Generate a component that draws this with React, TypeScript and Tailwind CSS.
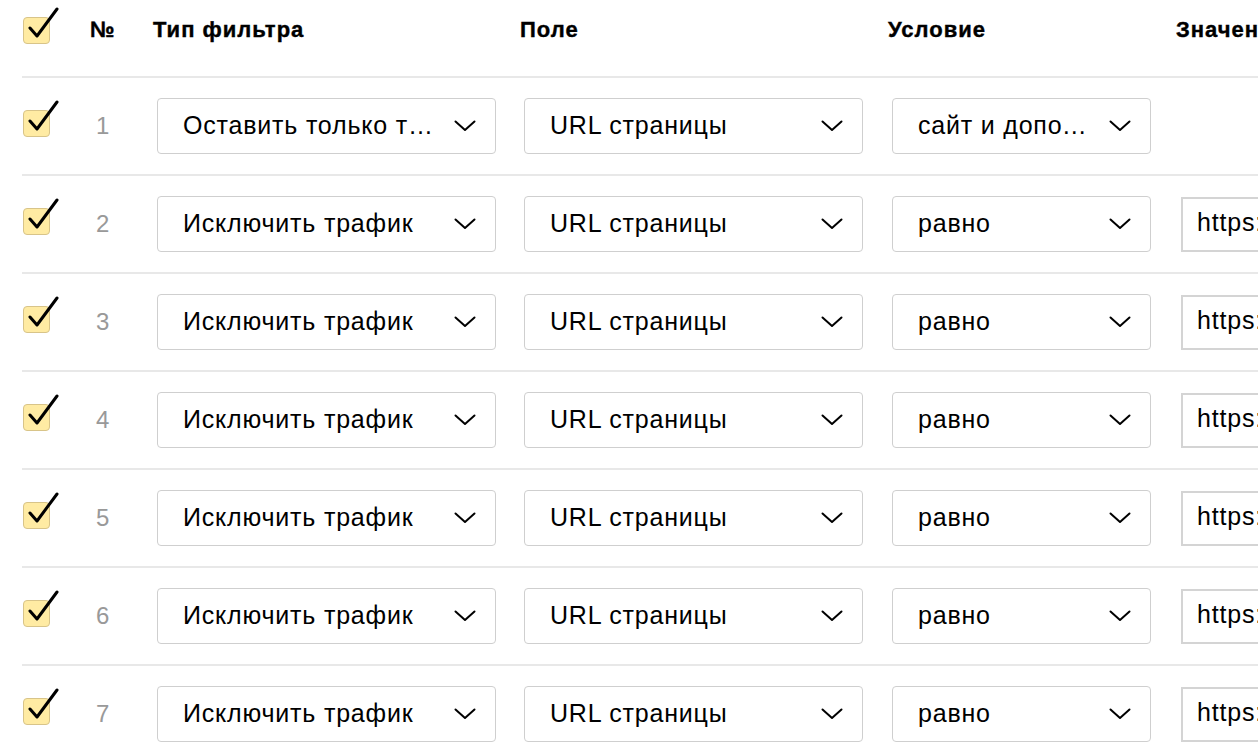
import React from "react";

const font = { fontFamily: '"Liberation Sans", Arial, sans-serif' };

function Check() {
  return (
    <div className="relative w-[27px] h-[27px] rounded-[4px] bg-[#ffeba3] border border-[#d8c489]">
      <svg
        className="absolute left-[3px] top-[-11px]"
        width="32"
        height="34"
        viewBox="0 0 32 34"
        fill="none"
      >
        <path d="M3 21 L10 29 L30 2" stroke="#000" strokeWidth="3" strokeLinecap="round" strokeLinejoin="round" />
      </svg>
    </div>
  );
}

function Chevron() {
  return (
    <svg width="22" height="12" viewBox="0 0 22 12" fill="none" className="shrink-0">
      <path d="M1.5 1.5 L11 10 L20.5 1.5" stroke="#000" strokeWidth="2" strokeLinecap="round" strokeLinejoin="round" />
    </svg>
  );
}

function Select({ text, width }: { text: string; width: string }) {
  return (
    <div
      className={`${width} h-[56px] border border-[#cfcfcf] rounded-[4px] bg-white flex items-center pl-[25px] pr-[19px] gap-[11px]`}
    >
      <span className="flex-1 min-w-0 truncate text-[25px] tracking-[0.8px] text-black leading-none pb-[2px]">{text}</span>
      <Chevron />
    </div>
  );
}

const rows = [
  { n: 1, type: "Оставить только трафик", cond: "сайт и дополнительные", value: null as string | null },
  { n: 2, type: "Исключить трафик", cond: "равно", value: "https://" },
  { n: 3, type: "Исключить трафик", cond: "равно", value: "https://" },
  { n: 4, type: "Исключить трафик", cond: "равно", value: "https://" },
  { n: 5, type: "Исключить трафик", cond: "равно", value: "https://" },
  { n: 6, type: "Исключить трафик", cond: "равно", value: "https://" },
  { n: 7, type: "Исключить трафик", cond: "равно", value: "https://" },
];

const head =
  "text-[22px] font-bold tracking-[1px] text-black leading-[26px] shrink-0 [-webkit-text-stroke:0.4px_black]";

export default function App() {
  return (
    <div className="w-[1258px] h-[750px] overflow-hidden bg-white" style={font}>
      <div className="ml-[22px] w-[1400px]">
        <div className="h-[78px] border-b-2 border-[#e8e8e8] flex items-start pt-[17px]">
          <div className="w-[68px] pl-[1px] shrink-0">
            <Check />
          </div>
          <div className={`w-[63px] ${head}`}>№</div>
          <div className={`w-[367px] ${head}`}>Тип фильтра</div>
          <div className={`w-[368px] ${head}`}>Поле</div>
          <div className={`w-[288px] ${head}`}>Условие</div>
          <div className={head}>Значение</div>
        </div>
        {rows.map((r) => (
          <div key={r.n} className="h-[98px] border-b-2 border-[#e8e8e8] flex items-center">
            <div className="w-[68px] pl-[1px] -mt-[6px] shrink-0">
              <Check />
            </div>
            <div className="w-[63px] pl-[6px] text-[24px] text-[#999] shrink-0">{r.n}</div>
            <div className="w-[367px] pl-[4px] shrink-0">
              <Select text={r.type} width="w-[339px]" />
            </div>
            <div className="w-[368px] pl-[4px] shrink-0">
              <Select text="URL страницы" width="w-[339px]" />
            </div>
            <div className="w-[288px] pl-[4px] shrink-0">
              <Select text={r.cond} width="w-[259px]" />
            </div>
            <div className="pl-[5px] shrink-0">
              {r.value !== null ? (
                <div className="w-[300px] h-[55px] border-2 border-[#d4d4d4] flex items-center pl-[14px] pb-[2px] text-[25px] tracking-[0.8px] text-black">
                  {r.value}
                </div>
              ) : null}
            </div>
          </div>
        ))}
      </div>
    </div>
  );
}
